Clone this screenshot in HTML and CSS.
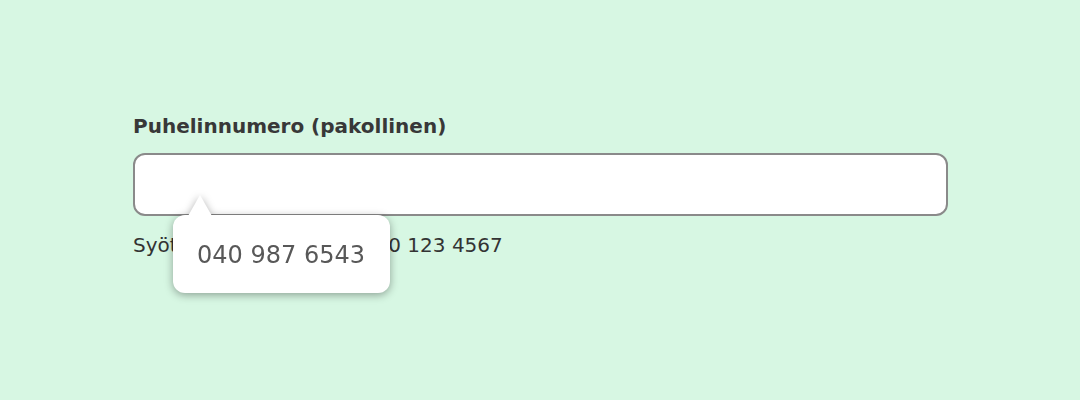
FILE: index.html
```html
<!DOCTYPE html>
<html lang="fi">
<head>
<meta charset="utf-8">
<title>Puhelinnumero</title>
<link rel="stylesheet" href="styles.css">
</head>
<body>
<main class="page">
  <div class="field">
    <label class="field-label" for="phone">Puhelinnumero (pakollinen)</label>
    <div class="input-wrap">
      <input class="field-input" id="phone" type="tel">
      <div class="tooltip">
        <span class="tooltip-arrow"></span>
        <span class="tooltip-text">040 987 6543</span>
      </div>
    </div>
    <p class="field-hint">Syötä numero muotoa 040 123 4567</p>
  </div>
</main>
</body>
</html>
```
FILE: styles.css
```css
html, body {
  margin: 0;
  padding: 0;
}
body {
  background: #d7f7e3;
  font-family: "DejaVu Sans", Verdana, sans-serif;
  color: #333333;
  width: 1080px;
  height: 400px;
  overflow: hidden;
}
.page {
  padding: 114px 0 0 133px;
}
.field {
  width: 815px;
}
.field-label {
  display: block;
  font-size: 20px;
  font-weight: bold;
  line-height: 24px;
  color: #383838;
  margin-bottom: 15px;
}
.input-wrap {
  position: relative;
}
.field-input {
  display: block;
  box-sizing: border-box;
  width: 815px;
  height: 63px;
  margin: 0;
  border: 2px solid #8a8a8a;
  border-radius: 12px;
  background: #ffffff;
  outline: none;
  font: inherit;
}
.field-hint {
  margin: 17px 0 0;
  font-size: 20px;
  line-height: 24px;
  color: #333333;
}
.tooltip {
  position: absolute;
  left: 40px;
  top: calc(100% - 1px);
  filter: drop-shadow(0 2px 4px rgba(0, 0, 0, 0.35));
}
.tooltip-arrow {
  position: absolute;
  left: 15px;
  top: -20px;
  width: 24px;
  height: 21px;
  background: #ffffff;
  clip-path: polygon(50% 0, 100% 100%, 0 100%);
}
.tooltip-text {
  display: block;
  box-sizing: border-box;
  width: 217px;
  height: 78px;
  padding: 26px 24px 0;
  background: #ffffff;
  border-radius: 12px;
  font-size: 24px;
  line-height: 28px;
  color: #585858;
  white-space: nowrap;
}
```
